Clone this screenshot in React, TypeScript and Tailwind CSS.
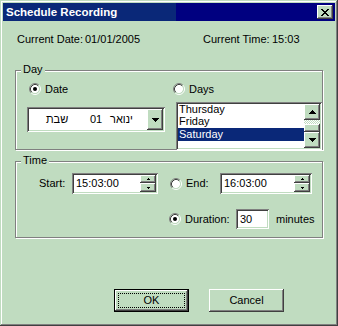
import React from "react";

const RAISED =
  "shadow-[inset_-1px_-1px_0_#404040,inset_1px_1px_0_#ffffff,inset_-2px_-2px_0_#808080,inset_2px_2px_0_#c0dcc0]";
const SUNKEN =
  "shadow-[inset_1px_1px_0_#808080,inset_-1px_-1px_0_#ffffff,inset_2px_2px_0_#404040,inset_-2px_-2px_0_#c0dcc0]";

function Tri({ rows, down }: { rows: number[]; down?: boolean }) {
  const w = rows[rows.length - 1];
  const list = down ? [...rows].reverse() : rows;
  return (
    <svg width={w} height={rows.length} viewBox={`0 0 ${w} ${rows.length}`} shapeRendering="crispEdges">
      {list.map((r, i) => (
        <rect key={i} x={(w - r) / 2} y={i} width={r} height={1} fill="#000" />
      ))}
    </svg>
  );
}

function CloseX() {
  const rows = ["XX....XX", ".XX..XX.", "..XXXX..", "...XX...", "..XXXX..", ".XX..XX.", "XX....XX"];
  return (
    <svg width="8" height="7" viewBox="0 0 8 7" shapeRendering="crispEdges">
      {rows.flatMap((row, y) =>
        row.split("").map((c, x) => (c === "X" ? <rect key={`${x}-${y}`} x={x} y={y} width={1} height={1} fill="#000" /> : null))
      )}
    </svg>
  );
}

function Radio({ checked }: { checked?: boolean }) {
  return (
    <svg width="12" height="12" viewBox="0 0 12 12" className="shrink-0">
      <circle cx="6" cy="6" r="4.2" fill="#fff" />
      <path d="M2.11 9.89A5.5 5.5 0 0 1 9.89 2.11" stroke="#808080" fill="none" />
      <path d="M9.89 2.11A5.5 5.5 0 0 1 2.11 9.89" stroke="#ffffff" fill="none" />
      <path d="M2.82 9.18A4.5 4.5 0 0 1 9.18 2.82" stroke="#404040" fill="none" />
      <path d="M9.18 2.82A4.5 4.5 0 0 1 2.82 9.18" stroke="#c0dcc0" fill="none" />
      {checked && <circle cx="6" cy="6" r="2" fill="#000" />}
    </svg>
  );
}

function Group({ label, className, children }: { label: string; className: string; children: React.ReactNode }) {
  return (
    <div
      className={`relative ml-[15px] w-[308px] border border-[#808080] shadow-[inset_1px_1px_0_#ffffff,1px_1px_0_#ffffff] ${className}`}
    >
      <span className="absolute left-[5px] top-[-8px] bg-[#c0dcc0] px-[2px] leading-[13px]">{label}</span>
      {children}
    </div>
  );
}

function Spin() {
  return (
    <div className="flex w-[16px] flex-col">
      <div className={`flex h-[8px] items-center justify-center ${RAISED} bg-[#c0dcc0]`}>
        <Tri rows={[1, 3]} />
      </div>
      <div className={`flex h-[9px] items-center justify-center ${RAISED} bg-[#c0dcc0]`}>
        <Tri rows={[1, 3]} down />
      </div>
    </div>
  );
}

function TimeEdit({ value, w }: { value: string; w: string }) {
  return (
    <div className={`flex h-[21px] ${w} bg-white p-[2px] ${SUNKEN}`}>
      <div className="flex flex-1 items-center pl-[2px] leading-[13px]">{value}</div>
      <Spin />
    </div>
  );
}

export default function App() {
  return (
    <div
      className={`relative flex h-[326px] w-[338px] flex-col bg-[#c0dcc0] font-['Liberation_Sans',Arial,sans-serif] text-[11px] leading-[13px] text-black shadow-[inset_-1px_-1px_0_#404040,inset_1px_1px_0_#c0dcc0,inset_-2px_-2px_0_#808080,inset_2px_2px_0_#ffffff]`}
    >
      {/* Title bar */}
      <div className="mx-[3px] mt-[3px] flex h-[18px] items-center bg-[linear-gradient(to_right,#0a2878_0,#0a2878_52%,#000080_52%,#000080_100%)] pl-[3px] pr-[2px]">
        <span className="flex-1 text-[11.5px] font-bold text-white">Schedule Recording</span>
        <div className={`flex h-[14px] w-[16px] items-center justify-center bg-[#c0dcc0] ${RAISED}`}>
          <CloseX />
        </div>
      </div>

      {/* Current date/time */}
      <div className="ml-[17px] mt-[12px] flex">
        <span className="w-[68px]">Current Date:</span>
        <span className="w-[118px]">01/01/2005</span>
        <span className="w-[69px]">Current Time:</span>
        <span>15:03</span>
      </div>

      {/* Day group */}
      <Group label="Day" className="mt-[24px] h-[80px]">
        <div className="flex">
          <div className="flex w-[159px] flex-col">
            <div className="ml-[13px] mt-[12px] flex h-[12px] items-center">
              <Radio checked />
              <span className="ml-[4px]">Date</span>
            </div>
            <div className={`ml-[11px] mt-[12px] flex h-[25px] w-[138px] bg-white p-[2px] ${SUNKEN}`}>
              <div className="flex flex-1 items-center pl-[17px]">
                <span className="w-[44px]">שבת</span>
                <span className="w-[20px]">01</span>
                <span>ינואר</span>
              </div>
              <div className={`flex w-[16px] items-center justify-center bg-[#c0dcc0] ${RAISED}`}>
                <Tri rows={[1, 3, 5, 7]} down />
              </div>
            </div>
          </div>
          <div className="flex flex-col">
            <div className="mt-[12px] flex h-[12px] items-center">
              <Radio />
              <span className="ml-[4px]">Days</span>
            </div>
            <div className={`relative ml-[3px] mt-[7px] flex h-[48px] w-[146px] bg-white p-[2px] ${SUNKEN}`}>
              <div className="flex-1 overflow-hidden">
                <div className="flex flex-col">
                  <div className="h-[11px] pl-[1px] leading-[11px]">Thursday</div>
                  <div className="h-[13px] pl-[1px]">Friday</div>
                  <div className="h-[13px] bg-[#0a2878] pl-[1px] text-white">Saturday</div>
                </div>
              </div>
              <div className="flex w-[16px] flex-col">
                <div className={`flex h-[16px] items-center justify-center bg-[#c0dcc0] ${RAISED}`}>
                  <Tri rows={[1, 3, 5, 7]} />
                </div>
                <div className="h-[4px] bg-[repeating-conic-gradient(#ffffff_0_25%,#c0dcc0_0_50%)] bg-[length:2px_2px]" />
                <div className={`h-[8px] bg-[#c0dcc0] ${RAISED}`} />
                <div className={`flex h-[16px] items-center justify-center bg-[#c0dcc0] ${RAISED}`}>
                  <Tri rows={[1, 3, 5, 7]} down />
                </div>
              </div>
            </div>
          </div>
        </div>
      </Group>

      {/* Time group */}
      <Group label="Time" className="mt-[11px] h-[77px]">
        <div className="mt-[11px] flex h-[21px] items-center pl-[23px]">
          <span className="w-[33px]">Start:</span>
          <TimeEdit value="15:03:00" w="w-[86px]" />
          <div className="ml-[12px]">
            <Radio />
          </div>
          <span className="ml-[4px] w-[34px]">End:</span>
          <TimeEdit value="16:03:00" w="w-[92px]" />
        </div>
        <div className="mt-[15px] flex h-[20px] items-center pl-[153px]">
          <Radio checked />
          <span className="ml-[4px] w-[51px]">Duration:</span>
          <div className={`flex h-[20px] w-[33px] items-center bg-white p-[2px] pl-[4px] ${SUNKEN}`}>30</div>
          <span className="ml-[7px]">minutes</span>
        </div>
      </Group>

      {/* Buttons */}
      <div className="ml-[114px] mt-[51px] flex gap-[20px]">
        <div className="h-[23px] w-[75px] border border-black">
          <div className={`flex h-full w-full items-center justify-center p-[3px] bg-[#c0dcc0] ${RAISED}`}>
            <div className="flex h-full w-full items-center justify-center border border-dotted border-black">OK</div>
          </div>
        </div>
        <div className={`flex h-[23px] w-[75px] items-center justify-center bg-[#c0dcc0] ${RAISED}`}>Cancel</div>
      </div>
    </div>
  );
}
